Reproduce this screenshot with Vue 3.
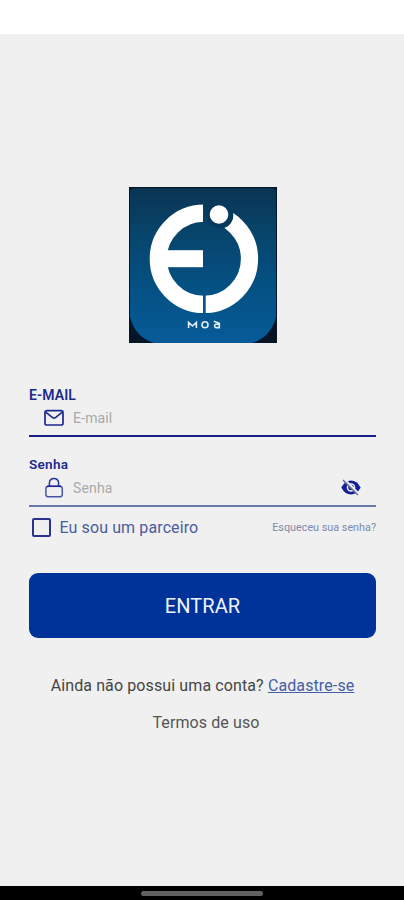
<script setup>
import { ref } from 'vue'

const email = ref('')
const password = ref('')
const partner = ref(false)
const visible = ref(false)
</script>

<template>
  <div class="screen">
    <div class="status"></div>
    <main class="content">
      <svg class="logo" width="148" height="156" viewBox="0 0 148 156">
        <defs>
          <linearGradient id="tile" x1="0" y1="0" x2="0" y2="1">
            <stop offset="0" stop-color="#0a3452" />
            <stop offset="0.3" stop-color="#07456c" />
            <stop offset="0.65" stop-color="#045184" />
            <stop offset="1" stop-color="#065b98" />
          </linearGradient>
          <mask id="cut">
            <rect width="148" height="156" fill="#fff" />
            <circle cx="90.2" cy="27.5" r="13.8" fill="#000" />
            <rect x="74" y="0" width="2.7" height="156" fill="#000" />
            <rect x="74" y="0" width="16" height="40" fill="#000" />
          </mask>
        </defs>
        <rect width="148" height="156" fill="#071626" />
        <path d="M1 3Q2 1 7 1H141Q146 1 147 3V130Q142 150 123 156H25Q6 150 1 130Z" fill="url(#tile)" />
        <circle cx="74.9" cy="71.8" r="45.6" fill="none" stroke="#fff" stroke-width="17.2" mask="url(#cut)" />
        <rect x="36" y="63.2" width="38" height="17" fill="#fff" />
        <circle cx="91.3" cy="28.5" r="13" fill="#06395c" />
        <circle cx="90" cy="27.5" r="9.3" fill="#fff" />
        <g fill="none" stroke="#e3edf5" stroke-width="1.6">
          <path d="M59.6 141V135.4L63.5 139L67.4 135.4V141" />
          <circle cx="76" cy="137.8" r="3" />
          <path d="M84.8 134.2L90.3 136.2V140.6H86.8A1.8 1.8 0 0 1 86.8 137.2H90.3" />
        </g>
      </svg>

      <label class="label email-label" for="email">E-MAIL</label>
      <div class="field email-field">
        <svg class="icon" width="22" height="22" viewBox="0 0 22 22" fill="none" stroke="#1b2990" stroke-width="1.7" stroke-linejoin="round">
          <rect x="2" y="3.6" width="18" height="14.4" rx="1.8" />
          <path d="M2.7 5.2L9.6 10.6Q11 11.7 12.4 10.6L19.3 5.2" />
        </svg>
        <input id="email" v-model="email" type="email" placeholder="E-mail" />
      </div>

      <label class="label password-label" for="password">Senha</label>
      <div class="field password-field">
        <svg class="icon" width="22" height="22" viewBox="0 0 22 22" fill="none" stroke="#4656a5" stroke-width="1.5">
          <rect x="2.9" y="9.2" width="16.4" height="10.6" rx="2.6" />
          <path d="M6.4 9V5.8Q6.8 1.4 11 1.4T15.6 5.8V9" stroke="#283699" />
          <path d="M4 9.3H18" stroke="#1b2990" />
        </svg>
        <input id="password" v-model="password" :type="visible ? 'text' : 'password'" placeholder="Senha" />
        <button class="eye" type="button" @click="visible = !visible">
          <svg width="22" height="20" viewBox="0 0 22 20">
            <path d="M1.3 9.5Q5 2.5 11 2.5T20.7 9.5Q17 16.5 11 16.5T1.3 9.5Z" fill="#14209a" />
            <circle cx="11" cy="9.5" r="4.3" fill="#f0f0f1" />
            <circle cx="11" cy="9.5" r="2.8" fill="#14209a" />
            <path d="M4.2 1.6L19 16.4" stroke="#f0f0f1" stroke-width="2.8" />
            <path d="M3 2L18 17" stroke="#667099" stroke-width="1.5" />
          </svg>
        </button>
      </div>

      <div class="options">
        <label class="partner">
          <input v-model="partner" type="checkbox" />
          <span>Eu sou um parceiro</span>
        </label>
        <a class="forgot">Esqueceu sua senha?</a>
      </div>

      <button class="enter" type="button"><span>ENTRAR</span></button>
      <p class="signup"><span>Ainda não possui uma conta?</span> <a>Cadastre-se</a></p>
      <p class="terms">Termos de uso</p>
    </main>
    <div class="navbar"><div class="handle"></div></div>
  </div>
</template>

<style>
body {
  margin: 0;
}
</style>

<style scoped>
.screen {
  display: flex;
  flex-direction: column;
  width: 404px;
  height: 900px;
  background: #f0f0f0;
  font-family: Roboto, sans-serif;
}
.status {
  height: 34px;
  background: #fff;
}
.content {
  flex: 1;
  display: flex;
  flex-direction: column;
  padding: 153px 28px 0 29px;
}
.logo {
  align-self: center;
}
.label {
  height: 18px;
  font-size: 14px;
  line-height: 18px;
  font-weight: 600;
  letter-spacing: 0.1px;
  color: #1b2a8c;
}
.email-label {
  margin-top: 43px;
}
.password-label {
  margin-top: 18px;
  font-size: 13.5px;
  letter-spacing: 0.3px;
}
.field {
  display: flex;
  align-items: center;
  padding-left: 14px;
  box-sizing: border-box;
}
.email-field {
  height: 33px;
  padding-bottom: 3px;
  border-bottom: 2px solid #15208b;
}
.password-field {
  height: 34px;
  padding-bottom: 3px;
  border-bottom: 2px solid #6478ac;
}
.icon {
  flex: none;
}
.field input {
  flex: 1;
  min-width: 0;
  margin: 0 0 0 8px;
  padding: 0;
  border: 0;
  outline: 0;
  background: none;
  font: 14px/20px Roboto, sans-serif;
  letter-spacing: 0.15px;
  color: #333;
}
.field input::placeholder {
  color: #a9a9a9;
  opacity: 1;
}
.eye {
  display: flex;
  margin-right: 14px;
  padding: 0;
  border: 0;
  background: none;
}
.options {
  display: flex;
  justify-content: space-between;
  align-items: center;
  height: 40px;
}
.partner {
  display: flex;
  align-items: center;
  gap: 8.5px;
  margin-left: 3px;
  font-size: 16px;
  letter-spacing: 0.11px;
  color: #4a5d9f;
}
.partner input {
  appearance: none;
  width: 19px;
  height: 19px;
  margin: 0;
  border: 2px solid #28328f;
  border-radius: 2px;
}
.forgot {
  font-size: 10.8px;
  color: #7b8aae;
}
.enter {
  height: 65px;
  margin-top: 26px;
  padding: 0;
  border: 0;
  border-radius: 9px;
  background: #003399;
  color: #f0f2ff;
  font: 400 20px/24px Roboto, sans-serif;
  letter-spacing: 0.1px;
}
.signup,
.terms {
  margin: 0;
  text-align: center;
  font-size: 16px;
  line-height: 20px;
  letter-spacing: 0.11px;
  color: #454545;
  white-space: nowrap;
}
.signup {
  margin-top: 38px;
}
.signup a {
  color: #4460a8;
  text-decoration: underline;
}
.terms {
  margin-top: 17px;
  padding-left: 7px;
  color: #555;
}
.navbar {
  height: 14px;
  display: flex;
  justify-content: center;
  background: #000;
}
.handle {
  width: 122px;
  height: 5px;
  margin-top: 5px;
  border-radius: 3px;
  background: #626262;
}
</style>
